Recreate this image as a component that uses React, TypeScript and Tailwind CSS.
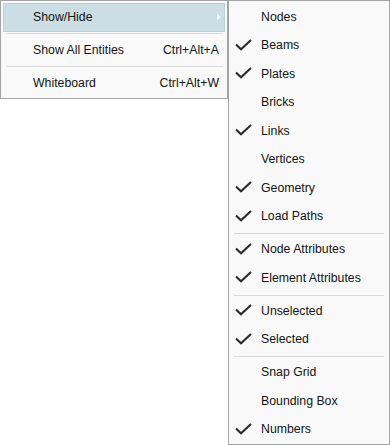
const font = { fontFamily: '"Liberation Sans", Arial, sans-serif' };

interface SubItem { label: string; checked?: boolean; }

const groups: SubItem[][] = [
  [
    { label: 'Nodes' },
    { label: 'Beams', checked: true },
    { label: 'Plates', checked: true },
    { label: 'Bricks' },
    { label: 'Links', checked: true },
    { label: 'Vertices' },
    { label: 'Geometry', checked: true },
    { label: 'Load Paths', checked: true },
  ],
  [
    { label: 'Node Attributes', checked: true },
    { label: 'Element Attributes', checked: true },
  ],
  [
    { label: 'Unselected', checked: true },
    { label: 'Selected', checked: true },
  ],
  [
    { label: 'Snap Grid' },
    { label: 'Bounding Box' },
    { label: 'Numbers', checked: true },
  ],
];

function Check() {
  return (
    <svg width="17" height="12" viewBox="0 0 17 12" className="absolute left-[6px] top-1/2 -translate-y-1/2">
      <path d="M1 5.5 L6 10.2 L16 1" fill="none" stroke="#2b2b2b" strokeWidth="2.1" />
    </svg>
  );
}

function Separator({ className }: { className: string }) {
  return <div className={`h-px bg-[#d9d9d9] ${className}`} />;
}

export default function App() {
  return (
    <div className="flex items-start w-[390px] h-[445px] bg-white text-[12.3px] text-[#141414]" style={font}>
      {/* Main menu */}
      <div className="w-[228px] shrink-0 border border-[#a4a4a4] bg-[#f9f9f9] px-[2px] pt-[2px]">
        <div className="relative flex items-center h-[29px] pl-[29px] bg-[#cadee4] border border-[#b9d1d9]">
          <span>Show/Hide</span>
          <span className="absolute right-[3px] top-[10px] w-0 h-0 border-y-[3.5px] border-y-transparent border-l-[4px] border-l-white" />
        </div>
        <div className="h-[4px] pt-[1px]"><Separator className="ml-[4px] mr-[2px]" /></div>
        <div className="flex items-center justify-between h-[29px] pl-[30px] pr-[6px]">
          <span>Show All Entities</span>
          <span>Ctrl+Alt+A</span>
        </div>
        <div className="h-[4px] pt-[1px]"><Separator className="ml-[4px] mr-[2px]" /></div>
        <div className="flex items-center justify-between h-[29px] pl-[30px] pr-[6px]">
          <span>Whiteboard</span>
          <span>Ctrl+Alt+W</span>
        </div>
      </div>

      {/* Show/Hide submenu */}
      <div className="w-[162px] shrink-0 border border-[#a4a4a4] bg-[#f9f9f9] pt-[1px] pb-[1px]">
        {groups.map((g, gi) => (
          <div key={gi}>
            {gi > 0 && <div className="h-[4.5px] pt-[3px]"><Separator className="mx-[5px]" /></div>}
            {g.map(item => (
              <div key={item.label} className="relative flex items-center h-[28.5px] pl-[32px] pt-px">
                {item.checked && <Check />}
                <span>{item.label}</span>
              </div>
            ))}
          </div>
        ))}
      </div>
    </div>
  );
}
